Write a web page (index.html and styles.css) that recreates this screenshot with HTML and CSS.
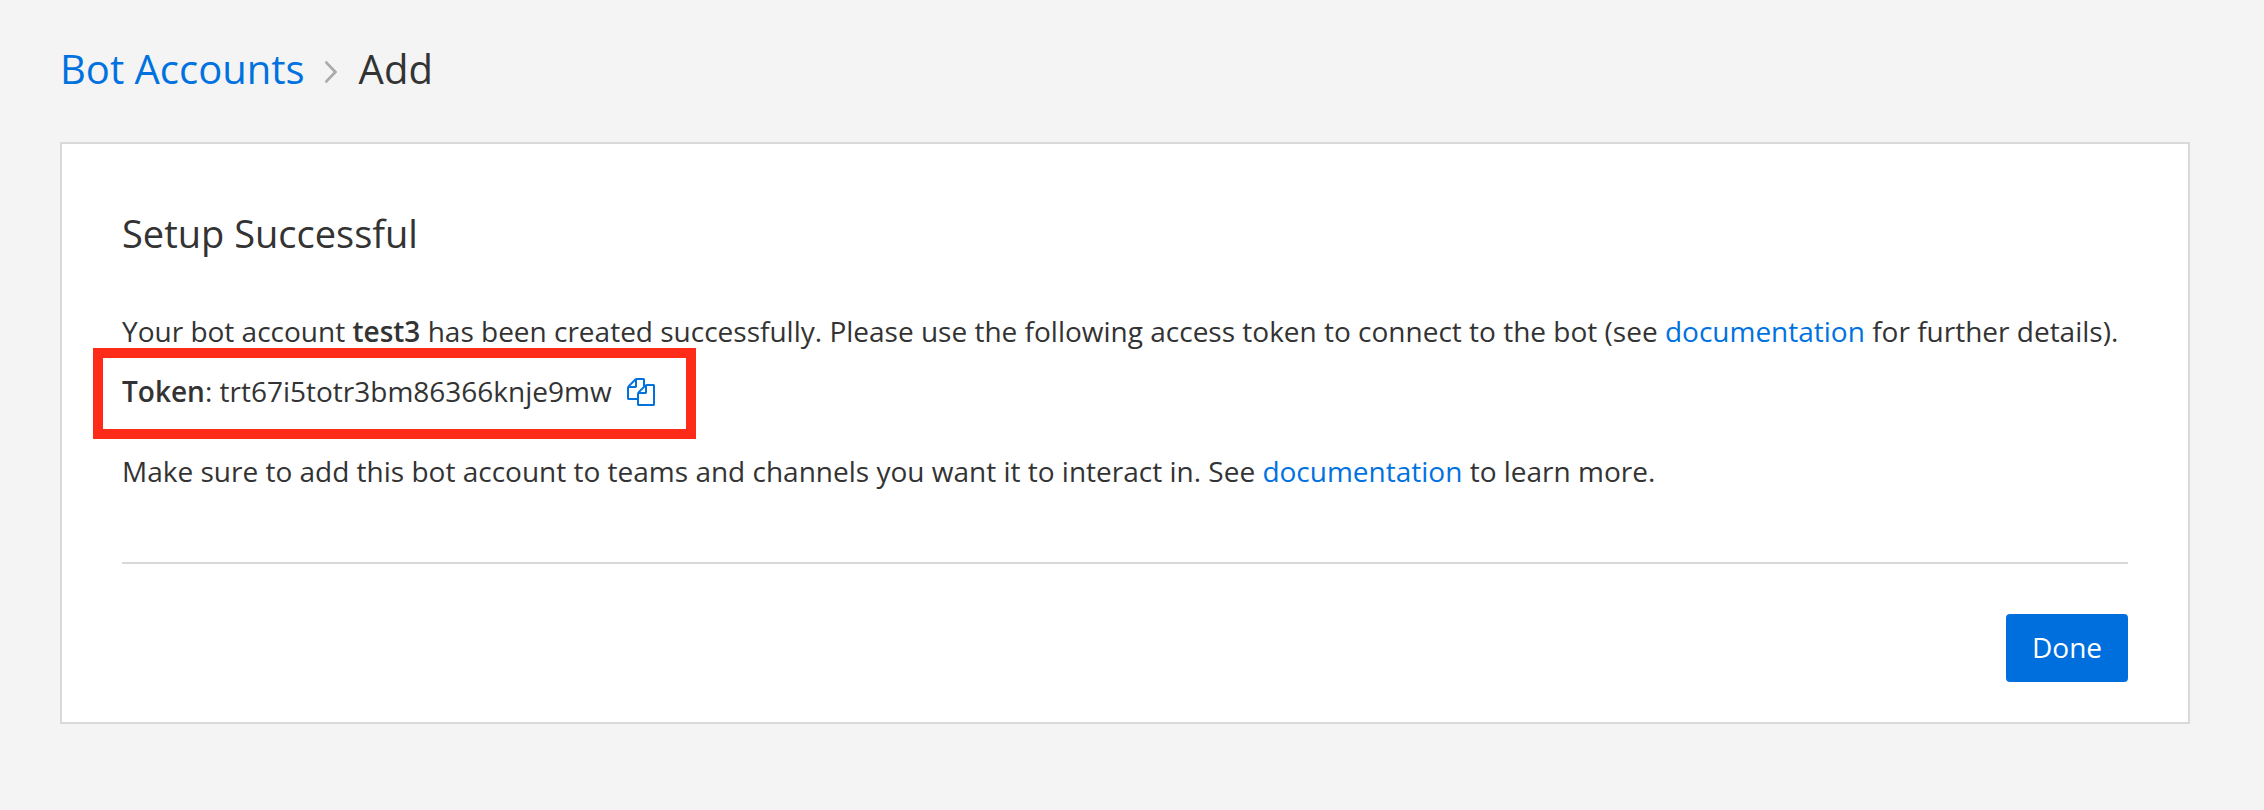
FILE: index.html
```html
<!DOCTYPE html>
<html lang="en">
<head>
<meta charset="utf-8">
<title>Bot Accounts - Add</title>
<link rel="stylesheet" href="styles.css">
</head>
<body>
<header class="breadcrumb">
  <a class="link" href="#">Bot Accounts</a>
  <svg class="chevron" width="14" height="24" viewBox="0 0 14 24"><path d="M2.4 2.6L11.4 12L2.4 21.4"/></svg>
  <span>Add</span>
</header>
<main class="card">
  <h1 class="title">Setup Successful</h1>
  <p class="intro">Your bot account <strong>test3</strong> has been created successfully. Please use the following access token to connect to the bot (see <a class="link" href="#">documentation</a> for further details).</p>
  <div class="token">
    <span><strong>Token</strong>: trt67i5totr3bm86366knje9mw</span>
    <svg class="copy" width="28" height="28" viewBox="0 0 1792 1792"><path d="M1696 384q40 0 68 28t28 68v1216q0 40-28 68t-68 28h-960q-40 0-68-28t-28-68v-288h-544q-40 0-68-28t-28-68v-672q0-40 20-88t48-76l408-408q28-28 76-48t88-20h416q40 0 68 28t28 68v328q68-40 128-40h416zm-544 213l-299 299h299v-299zm-640-384l-299 299h299v-299zm196 647l316-316v-416h-384v416q0 40-28 68t-68 28h-416v640h512v-256q0-40 20-88t48-76zm956 804v-1152h-384v416q0 40-28 68t-68 28h-416v640h896z"/></svg>
  </div>
  <p class="note">Make sure to add this bot account to teams and channels you want it to interact in. See <a class="link" href="#">documentation</a> to learn more.</p>
  <footer class="actions"><button class="done" type="button">Done</button></footer>
</main>
</body>
</html>
```

FILE: styles.css
```css
* { box-sizing: border-box; }
body {
  margin: 0;
  padding: 41px 74px 0 60px;
  background: #f4f4f4;
  color: #333;
  font: 28px/40px "Open Sans", sans-serif;
}
.link { color: #0072e0; text-decoration: none; }
strong { font-weight: 600; }
.breadcrumb {
  display: flex;
  align-items: center;
  height: 56px;
  margin-bottom: 45px;
  font-size: 40px;
  line-height: 56px;
}
.chevron {
  margin: 5px 21px 0 19px;
  fill: none;
  stroke: #aaa;
  stroke-width: 2.8;
  stroke-linecap: round;
}
.card {
  height: 582px;
  padding: 63px 60px 0;
  background: #fff;
  border: 2px solid #d9d9d9;
}
.title {
  margin: 0;
  font-size: 38px;
  font-weight: 400;
  line-height: 52px;
}
.intro { margin: 52px 0 0; white-space: nowrap; }
/* The red frame extends beyond the text column on the left */
.token {
  display: flex;
  align-items: flex-start;
  width: 603px;
  height: 91px;
  margin: -3px 0 0 -29px;
  padding: 13px 0 0 19px;
  border: 10px solid #ff2b19;
  white-space: nowrap;
}
.copy { margin: 7px 0 0 15.5px; fill: #0072e0; }
.note { margin: 12px 0 0; }
.actions {
  display: flex;
  justify-content: flex-end;
  margin-top: 71px;
  padding-top: 50px;
  border-top: 2px solid #d9d9d9;
}
.done {
  width: 122px;
  height: 68px;
  padding: 0 0 2px;
  border: 0;
  border-radius: 4px;
  background: #006fde;
  color: #fff;
  font: inherit;
}
```
